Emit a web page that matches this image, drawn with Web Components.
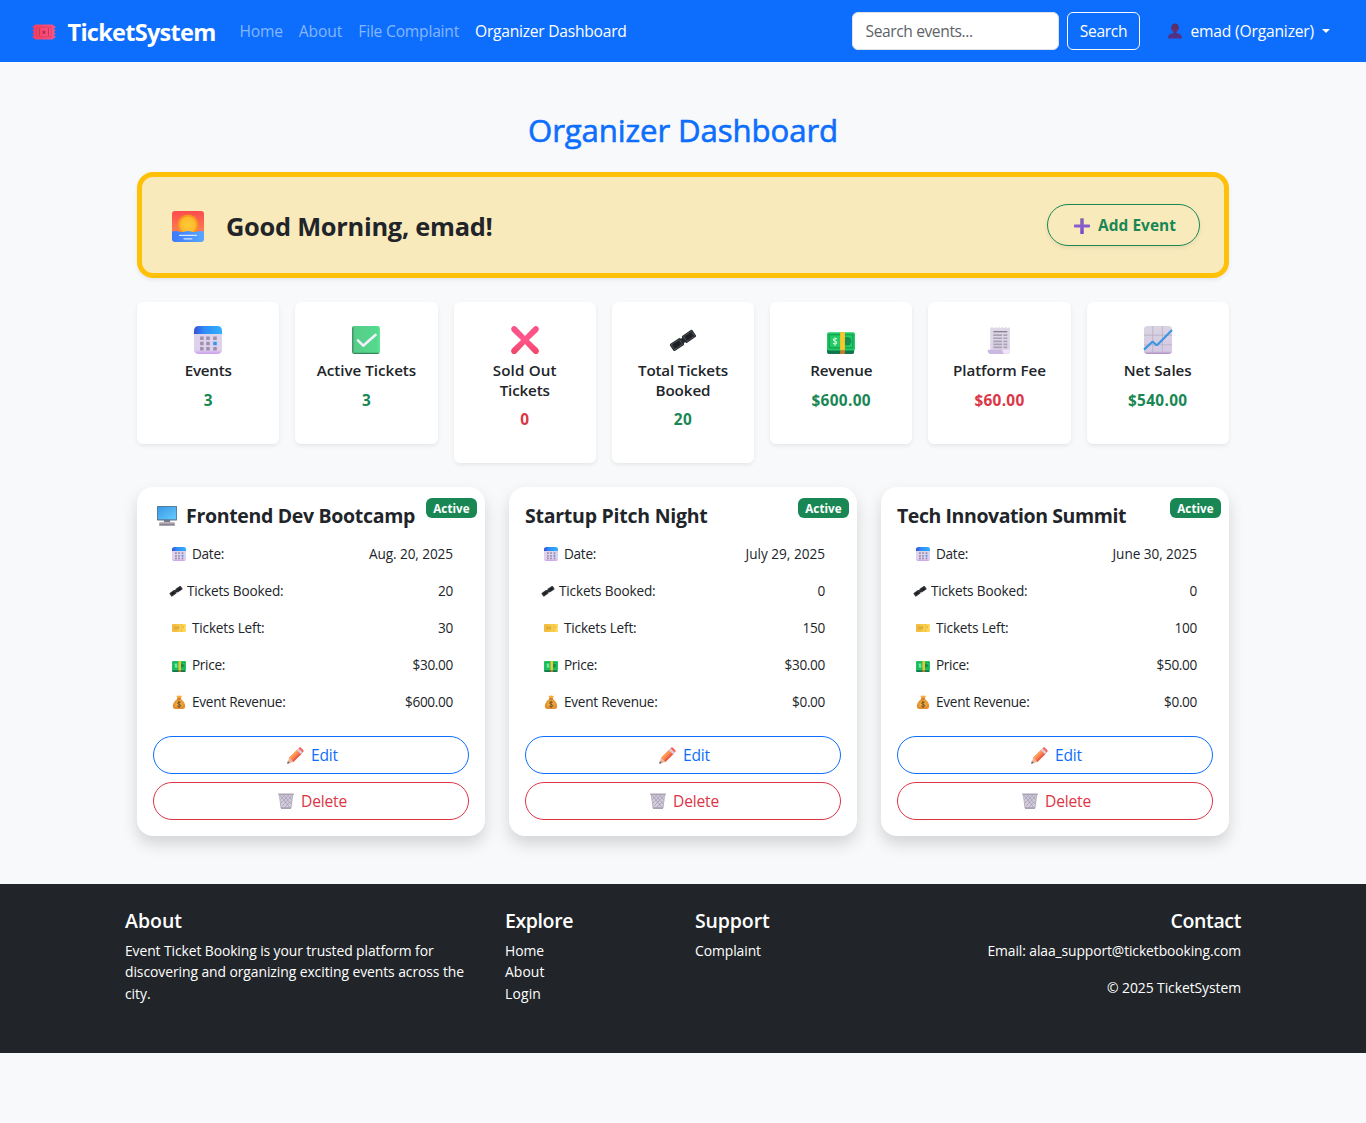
<!DOCTYPE html>
<html lang="en">
<head>
<meta charset="utf-8">
<title>TicketSystem - Organizer Dashboard</title>
<style>
html,body{margin:0;padding:0}
body{background:#f8f9fb;color:#212529;font:15.6px/24px "Open Sans","Noto Sans",sans-serif;min-height:1123px}
</style>
</head>
<body>
<ticket-app></ticket-app>
<script>
const define=(name,html,after)=>{
  const t=document.createElement('template');t.innerHTML=html;
  customElements.define(name,class extends HTMLElement{
    connectedCallback(){
      if(this.shadowRoot)return;
      const r=this.attachShadow({mode:'open'});
      r.append(t.content.cloneNode(true));
      if(after)after(this,r);
    }
  });
};

const ICONS={
ticket:`<defs><linearGradient id="a" x1="0" x2="1"><stop stop-color="#ef3f5f"/><stop offset="1" stop-color="#f8558c"/></linearGradient></defs><path fill="url(#a)" d="M4 6H28L29 8H31V11H29.5V13H31V15H29.5V17H31V19H29.5V21H31V24H29L28 26H4L3 24H1V21H2.500V19H1V17H2.500V15H1V13H2.500V11H1V8H3Z"/><rect x="6.500" y="9.500" width="19" height="13" fill="none" stroke="#d93a5b" stroke-width="1"/><path stroke="#c23450" stroke-width="1.200" d="M10 11v10M22 11v10"/><path fill="#a92843" d="m16 13.500.8 1.700 1.800.3-1.300 1.300.4 2-1.700-1-1.700 1 .4-2-1.300-1.300 1.800-.3z"/>`,
person:`<defs><linearGradient id="a" y1="0" y2="1" x2="0"><stop stop-color="#553065"/><stop offset="1" stop-color="#51308a"/></linearGradient></defs><path fill="url(#a)" d="M16 1c-5 0-7 3-7 7-1 0-2 4 .4 5 .7 2 2 3.500 3.600 4.500V20l-8 3c-2 1-3 3-3 8h28c0-5-1-7-3-8l-8-3v-2.500c1.600-1 2.900-2.500 3.600-4.500 2.400-1 1.400-5 .4-5 0-4-2-7-7-7z"/><path fill="#7a2c5c" opacity=".55" d="M10 9c3-2 9-2 12 0v5c-2 5-10 5-12 0z"/>`,
sunrise:`<defs><linearGradient id="a" y1="0" y2="1" x2="0"><stop stop-color="#fb4b4e"/><stop offset="1" stop-color="#ff8052"/></linearGradient><linearGradient id="b" x1="0" x2="1"><stop stop-color="#3d79fb"/><stop offset="1" stop-color="#58a7ff"/></linearGradient><radialGradient id="s"><stop stop-color="#ffcd37"/><stop offset="1" stop-color="#fdb52a"/></radialGradient><clipPath id="c"><rect width="32" height="31" rx="3"/></clipPath></defs><g clip-path="url(#c)"><path fill="url(#a)" d="M0 0h32v22H0z"/><circle cx="16" cy="14" r="9.200" fill="none" stroke="#f6941f" stroke-width="2.600" stroke-dasharray="3.200 1.620" stroke-linecap="round"/><circle cx="16" cy="14" r="8.500" fill="url(#s)"/><path fill="url(#b)" d="M0 20.500c3-.8 5-.6 7 0 2 .8 4 .8 6 0s4-.8 6 0 4 .8 6 0 5-.8 7 0V32H0z"/></g><path stroke="#d8e5ff" stroke-width="1.200" stroke-linecap="round" d="M7.500 24.300h17M12 27.800h8"/>`,
plus:`<defs><linearGradient id="a" y1="0" y2="1" x2="0"><stop stop-color="#7a67a9"/><stop offset=".55" stop-color="#8a5bd0"/><stop offset="1" stop-color="#7446c8"/></linearGradient></defs><path fill="url(#a)" d="M13.500 .5h5q1 0 1 1v11.500H30.500q1.500 0 1.500 1.200v3.500q0 1.300-1.500 1.300H19.500V30.500q0 1.500-1 1.500h-5q-1 0-1-1.500V19H1.500q-1.500 0-1.500-1.300v-3.500Q0 13 1.500 13h11V1.500q0-1 1-1z"/>`,
calendar:`<defs><linearGradient id="a" x1="0" x2="1"><stop stop-color="#384fd5"/><stop offset=".35" stop-color="#2f8bf8"/><stop offset="1" stop-color="#2fb1ff"/></linearGradient><linearGradient id="b" y1="0" y2="1" x2="0"><stop stop-color="#dcd5e7"/><stop offset=".85" stop-color="#e0d0f0"/><stop offset="1" stop-color="#c79eea"/></linearGradient></defs><rect width="32" height="32" rx="5" fill="url(#b)"/><path fill="url(#a)" d="M0 9V6Q0 0 6 0h20q6 0 6 6v3z"/><g fill="#9c91a9"><path d="M7 12h4v4H7zm7 0h4v4h-4zm8 0h4v4h-4zM7 18h4v4H7zm7 0h4v4h-4zM7 24h4v4H7zm7 0h4v4h-4zm8 0h4v4h-4z"/></g><path fill="#2f96f3" d="M22 18h4v4h-4z"/>`,
check:`<defs><linearGradient id="a" x1="0" x2="1"><stop stop-color="#438665"/><stop offset=".09" stop-color="#55cd88"/><stop offset=".9" stop-color="#55d98e"/><stop offset="1" stop-color="#62e797"/></linearGradient></defs><rect width="32" height="32" rx="2.500" fill="url(#a)"/><path fill="#36865a" d="M1 30.700h30L29.500 32h-27z"/><path d="m6.800 16.500 6 6L27 10" fill="none" stroke="#f5effb" stroke-width="2.900" stroke-linecap="round" stroke-linejoin="round"/>`,
cross:`<defs><linearGradient id="a" y1="0" y2="1" x2="0"><stop stop-color="#f85287"/><stop offset=".5" stop-color="#ff568a"/><stop offset="1" stop-color="#f04566"/></linearGradient></defs><path fill="url(#a)" d="M1 1q2.500-2 5 0l10 10.500L26 1q2.500-2 5 0 2 2.500 0 5L20.500 16 31 26q2 2.500 0 5-2.500 2-5 0L16 20.500 6 31q-2.500 2-5 0-2-2.500 0-5l10.500-10L1 6q-2-2.500 0-5z"/>`,
tickets:`<g transform="translate(16 16.500) rotate(-34)"><rect x="-15.500" y="-4.800" width="14.500" height="9.600" rx="1.500" fill="#24272b"/><rect x="1" y="-4.800" width="14.500" height="9.600" rx="1.500" fill="#24272b"/><path fill="#24272b" d="M-3-3h6v6h-6z"/><path fill="none" stroke="#85898d" stroke-width=".8" stroke-dasharray=".9 .8" d="M-13.900-3.400h11v6.800h-11zM2.900-3.400h11v6.800H2.900z"/><path fill="#1b1e22" d="M-11.500-2h6v4h-6zM5.500-2h6v4h-6z"/></g>`,
money:`<path fill="#10754b" d="M1 20h30v10q0 2-2 2H3q-3 0-3-3V22z"/><rect y="7" width="32" height="21" rx="2" fill="#22cc65"/><rect x="2.500" y="10" width="27" height="15" fill="none" stroke="#199553" stroke-width="1.200"/><circle cx="23" cy="17.500" r="4.800" fill="#169052"/><path fill="none" stroke="#d5f4d9" stroke-width="1.200" d="M11.200 15c-1-1.500-4-1-4 .8 0 1.500 4 1.400 4 3.200 0 2-3 2-4.300.5M9.200 13v9.500"/><path fill="#fbc52c" d="M15 7h5.500v21H15z"/><path fill="#c9792e" d="M15 28h5.500v4H15z"/>`,
receipt:`<defs><linearGradient id="a" y1="0" y2="1" x2="0"><stop stop-color="#dcd8e6"/><stop offset="1" stop-color="#dfd2ed"/></linearGradient></defs><path fill="url(#a)" d="M6 2.500 8 1l2 1.500L12 1l2 1.500L16 1l2 1.500L20 1l2 1.500L24 1l2 1.500L28.500 1V29q0 3-3 3H6z"/><path fill="#cbb8df" d="M3 27h17q-.5 5 3 5H7q-4 0-4-5z"/><path fill="#eee3fa" d="M20 27h8.500v2q0 3-4 3T20 28z"/><path stroke="#85808f" stroke-width="1.500" d="M9.500 6.500h16"/><path stroke="#a8a2b1" stroke-width="1.900" d="M9.500 10.500h10m1.500 0h4.500m-16 3.500h10m1.500 0h4.500m-16 3.500h10m1.500 0h4.500m-16 3.500h10m1.500 0h4.500m-16 3.500h10m1.500 0h4.500"/>`,
chart:`<defs><linearGradient id="a" y1="0" y2="1" x2="0"><stop stop-color="#d9d4e2"/><stop offset=".9" stop-color="#d6c9e5"/><stop offset="1" stop-color="#aa8ac0"/></linearGradient></defs><rect width="32" height="32" rx="4" fill="url(#a)"/><path stroke="#b9b2c4" stroke-width="1" d="M10 0v31M21 0v31M0 10.500h32M0 21.500h32"/><path fill="none" stroke="#3996df" stroke-width="2.400" d="m0 27 9-8.500q1-.8 2 .3l2.500 2.400q1.300 1 2.500-.3L32 4.500"/>`,
computer:`<defs><linearGradient id="a" x2="1" y2="1"><stop stop-color="#3b98e5"/><stop offset="1" stop-color="#63ccff"/></linearGradient></defs><path fill="#827d88" d="M11 22h10v4H11z"/><rect width="32" height="23" rx="1" fill="#57758d"/><path fill="url(#a)" d="M1.300 1.300h29.400v20H1.300z"/><path fill="#aaa4b0" d="M5 26h22q1.500 0 1.500 1.500v4.500H3.500V27.500q0-1.500 1.500-1.500z"/><path stroke="#77717e" d="M4 29.500h24"/>`,
yellow:`<defs><linearGradient id="a" x1="0" x2="1"><stop stop-color="#f1b93b"/><stop offset="1" stop-color="#ffdc5a"/></linearGradient></defs><path fill="url(#a)" d="M2 7h28q2 0 2 2v4q-3 3 0 6v4q0 2-2 2H2q-2 0-2-2V9q0-2 2-2z"/><path stroke="#c98f33" stroke-width="1.700" d="M5 14h12M5 18h11"/><path stroke="#d6a034" stroke-dasharray="2 2" stroke-width="1.500" d="M22.500 8v17"/><path fill="#b87623" d="m27 12 1 2-1 2-1-2z"/>`,
bag:`<defs><radialGradient id="a"><stop stop-color="#f7bd4b"/><stop offset="1" stop-color="#e18b29"/></radialGradient></defs><path fill="#f4a936" d="m10 1 4 2 2-3 3 3 4-2-3 8h-7z"/><path fill="url(#a)" d="M12 9h8c6 4 10 10 10 16q0 7-6 7H8q-6 0-6-7C2 19 6 13 12 9z"/><path stroke="#b96527" stroke-width="2" d="M12 8.500h8"/><path fill="none" stroke="#624023" stroke-width="2" d="M20 18c-2-3-8-2-7 1 1 3 7 2 7 5 0 4-6 4-8 1M16 14v15"/>`,
pencil:`<path fill="#ff8054" d="m4 20 16-16 8 8-16 16z"/><path fill="#ffa052" d="m4 20 16-16 2.500 2.500-16 16z"/><path fill="#e85f46" d="M9.500 25.500 25.500 9.500 28 12 12 28z"/><path fill="#d8cde1" d="m18.500 5.500 4-4 8 8-4 4z"/><path fill="#f9625a" d="m21.500 2.500 1-1q2-2 4 0l4 4q2 2 0 4l-1 1z"/><path fill="#e8b394" d="m4 20 8 8-11.500 3.500z"/><path fill="#5c465c" d="m1.500 27 3.500 3.300-4.500 1.200z"/>`,
trash:`<path fill="#d3cddd" d="M2 3h28l-4 28H6z"/><path fill="none" stroke="#948ca3" stroke-width="1.200" d="m5 5 18 23M12 5l14 17M20 5l8 10M28 5 8 26M21 5 6 20M13 5 5 13M25 17 12 30"/><path fill="none" stroke="#aaa3b5" stroke-width="1.500" d="M3 5 6 30h20L29 5"/><path fill="#aaa3b6" d="M.5 1h31v3.500H.5zM6 28.500h20V32H6z"/>`
};
define('ui-icon',`<style>:host{display:inline-flex;flex:none;width:var(--s,16px);height:var(--s,16px)}svg{display:block;width:100%;height:100%;overflow:visible}</style><svg viewBox="0 0 32 32" aria-hidden="true"></svg>`,
(el,r)=>{el.style.setProperty('--s',el.getAttribute('size')+'px');r.querySelector('svg').innerHTML=ICONS[el.getAttribute('name')]});

define('nav-bar',`<style>
:host{display:flex;align-items:center;height:62px;background:#0d6efd;color:#fff;padding:0 36px 0 32px;box-sizing:border-box}
.brand{display:flex;align-items:center;gap:11.500px;font-weight:700;font-size:23.5px;line-height:36px;margin-right:24px}
.brand ui-icon{margin-top:2px}
.brand fit-text{padding-top:2px}
nav{display:flex;gap:16px;color:#86b6fe}
nav .on{color:#fff}
.right{display:flex;align-items:center;margin-left:auto}
input{box-sizing:border-box;width:207px;height:38px;border:1px solid #dee2e6;border-radius:6px;padding:0 12px 0 13px;font:15.6px "Open Sans",sans-serif;letter-spacing:-.4px;background:#fff;margin:0 8px 0 0}
input::placeholder{color:#5d6268;opacity:1}
button{box-sizing:border-box;width:73px;height:38px;padding:0 0 0 1px;border:1px solid #f8f9fa;border-radius:6px;background:none;color:#fff;font:inherit}
.user{display:flex;align-items:center;margin-left:27px}
.user fit-text{margin:0 8px}
.caret{border:4px solid transparent;border-top-color:#fff;border-bottom:0}
</style>
<div class="brand"><ui-icon name="ticket" size="24"></ui-icon><fit-text w="148">TicketSystem</fit-text></div>
<nav><fit-text w="43.300">Home</fit-text><fit-text w="43.500">About</fit-text><fit-text w="100.800">File Complaint</fit-text><fit-text class="on" w="151.500">Organizer Dashboard</fit-text></nav>
<div class="right"><input placeholder="Search events..."><button><fit-text w="47.500">Search</fit-text></button>
<div class="user"><ui-icon name="person" size="16"></ui-icon><fit-text w="123.500">emad (Organizer)</fit-text><span class="caret"></span></div></div>`);

define('greeting-banner',`<style>
:host{display:flex;align-items:center;box-sizing:border-box;height:106px;border:5px solid #ffc107;border-radius:16px;background:#f9eabc;padding:0 24px 0 30px;box-shadow:0 2px 4px rgba(0,0,0,.075)}
ui-icon[name=sunrise]{margin-top:4px}
h2{margin:2px 0 0 22px;font-size:25.4px;line-height:36px;font-weight:700}
button{display:flex;align-items:center;justify-content:center;gap:8px;margin:0 0 0 auto;box-sizing:border-box;width:153px;height:42px;border:1px solid #198754;border-radius:21px;background:none;color:#198754;font:700 15.4px/24px "Open Sans",sans-serif;padding:1px 0 0 3px;box-shadow:0 2px 4px rgba(0,0,0,.075)}
</style><ui-icon name="sunrise" size="32"></ui-icon><h2><fit-text w="266.500">Good Morning, emad!</fit-text></h2><button><ui-icon name="plus" size="16"></ui-icon><fit-text w="78">Add Event</fit-text></button>`);

define('stat-card',`<style>
:host{display:block;flex:1 1 0;box-sizing:border-box;padding:16px 0;background:#fff;border-radius:6px;text-align:center;box-shadow:0 2px 4px rgba(0,0,0,.075)}
.icon{display:flex;justify-content:center;box-sizing:border-box;height:42px;padding-top:8px}
.label{display:flex;flex-direction:column;align-items:center;font-size:15.2px;font-weight:600;line-height:20px;margin-bottom:9px}
.value{font-size:15.4px;font-weight:700;color:#198754;line-height:24px;margin-bottom:15px}
:host([tone=red]) .value{color:#dc3545}
:host([tall]) .label{margin-bottom:8px}
</style><div class="icon"><slot name="icon"></slot></div><div class="label"><slot></slot></div><div class="value"><slot name="value"></slot></div>`);

define('outline-button',`<style>
:host{display:block}
button{display:flex;align-items:center;justify-content:center;gap:7px;width:100%;height:38px;box-sizing:border-box;padding:0 0 0 3px;border:1px solid currentColor;border-radius:19px;background:none;color:#0d6efd;font:inherit}
:host([tone=red]) button{color:#dc3545}
</style><button><slot></slot></button>`);

define('event-row',`<style>
:host{display:flex;justify-content:space-between;padding:8px 16px;font-size:13.6px;line-height:21px}
span{display:flex;align-items:center;gap:6.500px}
:host([tight]) span{gap:4px}
</style><span><slot name="icon"></slot><slot></slot></span><slot name="value"></slot>`);

define('event-card',`<style>
:host{display:block;position:relative;flex:1 1 0;box-sizing:border-box;padding:16px;height:349px;background:#fff;border-radius:16px;box-shadow:0 8px 16px rgba(0,0,0,.15)}
h5{display:flex;align-items:center;box-sizing:border-box;padding-top:2px;margin:0 0 8px;height:24px;font-size:19.5px;line-height:24px;font-weight:700}
.rows{margin-bottom:16px}
.badge{position:absolute;top:11px;right:8px;width:51px;height:20px;line-height:21px;border-radius:6px;background:#198754;color:#fff;font-size:11.6px;font-weight:700;text-align:center}
outline-button+outline-button{margin-top:8px}
</style><h5><slot name="title"></slot></h5><span class="badge"><fit-text w="36.500">Active</fit-text></span>
<div class="rows"><slot></slot></div>
<outline-button><ui-icon name="pencil" size="17"></ui-icon><fit-text w="27">Edit</fit-text></outline-button>
<outline-button tone="red"><ui-icon name="trash" size="16"></ui-icon><fit-text w="46">Delete</fit-text></outline-button>`);

define('site-footer',`<style>
:host{display:block;box-sizing:border-box;height:169px;background:#212529;color:#fff;padding:25px 125px 0;font-size:13.900px;line-height:21.300px}
.grid{display:grid;grid-template-columns:380px 190px 190px 1fr}
h5{margin:0 0 7px;font-size:19.500px;line-height:24px;font-weight:600}
.grid>div{display:flex;flex-direction:column;align-items:flex-start}
.grid>.contact{align-items:flex-end}
.copy{margin-top:15.500px}
</style><div class="grid">
<div><h5><fit-text w="57">About</fit-text></h5><fit-text w="308.500">Event Ticket Booking is your trusted platform for</fit-text><fit-text w="339">discovering and organizing exciting events across the</fit-text><fit-text w="25.500">city.</fit-text></div>
<div><h5><fit-text w="68">Explore</fit-text></h5><fit-text w="39">Home</fit-text><fit-text w="39.500">About</fit-text><fit-text w="36">Login</fit-text></div>
<div><h5><fit-text w="74.500">Support</fit-text></h5><fit-text w="66">Complaint</fit-text></div>
<div class="contact"><h5><fit-text w="70.500">Contact</fit-text></h5><fit-text w="253.500">Email: alaa_support@ticketbooking.com</fit-text><fit-text class="copy" w="134">© 2025 TicketSystem</fit-text></div>
</div>`);

const stats=[['calendar','Events:47','3:9'],['check','Active Tickets:99.5','3:9'],['cross','Sold Out:64|Tickets:50','0:9','red'],['tickets','Total Tickets:90|Booked:55','20:18.5'],['money','Revenue:62','$600.00:59.5'],['receipt','Platform Fee:93','$60.00:50','red'],['chart','Net Sales:68','$540.00:59.5']];
const events=[['Frontend Dev Bootcamp',229,'Aug. 20, 2025:84','20:15','30:15','$30.00:40.5','$600.00:48'],['Startup Pitch Night',182.5,'July 29, 2025:79.5','0:7.5','150:22.5','$30.00:40.5','$0.00:33'],['Tech Innovation Summit',229,'June 30, 2025:84.5','0:7.5','100:22.5','$50.00:40.5','$0.00:33']];
const fields=[['calendar','Date',32],['tickets','Tickets Booked',96.5],['yellow','Tickets Left',72.5],['money','Price',33],['bag','Event Revenue',93.5]];
const fit=(s,slot='')=>{const[t,w]=s.split(':');return `<fit-text ${slot} w="${w}">${t}</fit-text>`};
define('ticket-app',`<style>
:host{display:block}
main{width:1092px;margin:0 auto;padding:49px 0 48px}
h1{margin:0;text-align:center;font-size:31.200px;font-weight:400;-webkit-text-stroke:.6px currentColor;line-height:38px;color:#0d6efd;padding-bottom:23px}
.stats{display:flex;align-items:flex-start;gap:15.800px;margin:24px 0}
.events{display:flex;gap:24px}
</style><nav-bar></nav-bar><main><h1><fit-text w="310">Organizer Dashboard</fit-text></h1><greeting-banner></greeting-banner>
<div class="stats">${stats.map(([i,l,v,t])=>`<stat-card tone="${t||''}" ${l.includes('|')?'tall':''}><ui-icon slot="icon" name="${i}" size="28"></ui-icon>${l.split('|').map(x=>fit(x)).join('')}${fit(v,'slot="value"')}</stat-card>`).join('')}</div>
<div class="events">${events.map(([title,w,...vals],n)=>`<event-card>${n?'':'<ui-icon slot="title" name="computer" size="20" style="margin:0 9px 0 4px"></ui-icon>'}<fit-text slot="title" w="${w}">${title}</fit-text>${fields.map(([i,l,lw],k)=>`<event-row ${k==1?'tight':''}><ui-icon slot="icon" name="${i}" size="14" style="margin-left:${k==1?0:2.5}px"></ui-icon><fit-text w="${lw}">${l}:</fit-text>${fit(vals[k],'slot="value"')}</event-row>`).join('')}</event-card>`).join('')}</div>
</main><site-footer></site-footer>`);

/* Spaces the letters evenly so that a line takes exactly the width in its "w" attribute. */
define('fit-text',`<style>:host{display:inline-block;white-space:nowrap}</style><slot></slot>`,(el)=>{
  const w=parseFloat(el.getAttribute('w')),range=document.createRange();
  range.selectNodeContents(el);
  const natural=range.getBoundingClientRect().width;
  if(natural)el.style.letterSpacing=(w-natural)/el.textContent.length+'px';
});
</script>
</body>
</html>
